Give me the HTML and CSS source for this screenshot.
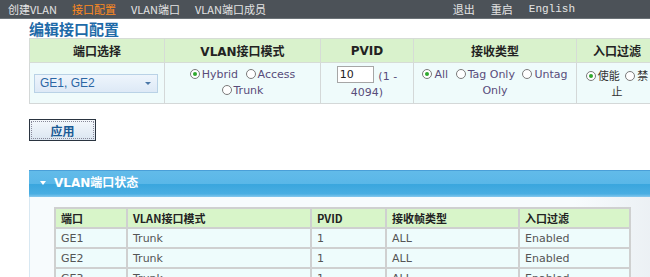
FILE: index.html
```html
<!DOCTYPE html>
<html lang="zh-CN">

<head>
    <meta charset="UTF-8">
    <title>接口配置</title>
    <link rel="stylesheet" href="styles.css">
</head>

<body>
    <!-- barra de navegação -->
    <div class="topbar">
        <div class="nav">
            <a>创建VLAN</a>
            <a class="active">接口配置</a>
            <a>VLAN端口</a>
            <a>VLAN端口成员</a>
        </div>
        <div class="tools">
            <a>退出</a>
            <a>重启</a>
            <a>English</a>
        </div>
    </div>

    <div class="content">
        <h1 class="title">编辑接口配置</h1>

        <table class="config">
            <tr>
                <th class="c1">端口选择</th>
                <th class="c2">VLAN接口模式</th>
                <th class="c3">PVID</th>
                <th class="c4">接收类型</th>
                <th class="c5">入口过滤</th>
            </tr>
            <tr>
                <td>
                    <div class="select">GE1, GE2<span class="caret"></span></div>
                </td>
                <td>
                    <span class="opt"><span class="radio on"></span>Hybrid</span>
                    <span class="opt"><span class="radio"></span>Access</span><br>
                    <span class="opt"><span class="radio"></span>Trunk</span>
                </td>
                <td>
                    <span class="pvid">10</span> (1 - 4094)
                </td>
                <td>
                    <span class="opt"><span class="radio on"></span>All</span>
                    <span class="opt"><span class="radio"></span>Tag Only</span>
                    <span class="opt"><span class="radio"></span>Untag</span> Only
                </td>
                <td class="filter">
                    <span class="radio on"></span>使能 <span class="radio gap"></span>禁止
                </td>
            </tr>
        </table>

        <button class="apply">应用</button>

        <div class="panel">
            <div class="panel-head"><span class="arrow"></span>VLAN端口状态</div>
            <div class="panel-body">
                <table class="status">
                    <tr>
                        <th class="s1">端口</th>
                        <th class="s2">VLAN接口模式</th>
                        <th class="s3">PVID</th>
                        <th class="s4">接收帧类型</th>
                        <th class="s5">入口过滤</th>
                    </tr>
                    <tr>
                        <td>GE1</td>
                        <td>Trunk</td>
                        <td>1</td>
                        <td>ALL</td>
                        <td>Enabled</td>
                    </tr>
                    <tr>
                        <td>GE2</td>
                        <td>Trunk</td>
                        <td>1</td>
                        <td>ALL</td>
                        <td>Enabled</td>
                    </tr>
                    <tr>
                        <td>GE3</td>
                        <td>Trunk</td>
                        <td>1</td>
                        <td>ALL</td>
                        <td>Enabled</td>
                    </tr>
                </table>
            </div>
        </div>
    </div>
</body>

</html>
```

FILE: styles.css
```css
html, body {
    margin: 0;
    overflow: hidden;
    background-color: #fff;
    font-family: "DejaVu Sans", "Noto Sans CJK SC", sans-serif;
}

.topbar {
    display: flex;
    justify-content: space-between;
    height: 18px;
    background-color: #4c5258;
    border-bottom: 1px solid #6b7277;
    font-family: "Noto Sans CJK SC", sans-serif;
    font-size: 11px;
    line-height: 18px;
    color: #e4e4e4;
}

.nav {
    display: flex;
    gap: 15px;
    padding-left: 8px;
}

.nav a.active {
    color: #ff8a1e;
}

.tools {
    display: flex;
    gap: 16px;
    padding-right: 75px;
}

.tools a:last-child {
    font-family: "Liberation Mono", monospace;
}

.content {
    margin-left: 29px;
    width: 640px;
}

.title {
    margin: 0;
    height: 19px;
    font-family: "Noto Sans CJK SC", sans-serif;
    font-size: 15px;
    line-height: 19px;
    color: #1e6aa8;
    font-weight: bold;
}

table {
    border-collapse: collapse;
}

.config {
    width: 623px;
    table-layout: fixed;
    font-size: 11px;
    color: #584c7a;
}

.config th {
    height: 23px;
    background-color: #d9f2cc;
    border: 1px solid #d6dcd6;
    font-size: 12px;
    color: #222;
    padding: 0 4px;
}

.config td {
    height: 40px;
    background-color: #effbfb;
    border: 1px solid #d4d8d8;
    text-align: center;
    line-height: 16px;
    padding: 0 4px;
}

.c1 { width: 126px; }
.c2 { width: 147px; }
.c3 { width: 84px; }
.c4 { width: 154px; }
.c5 { width: 72px; }

.select {
    position: relative;
    height: 19px;
    width: 124px;
    border: 1px solid #b9d2e6;
    background: linear-gradient(#eef5fc, #dde9f6);
    text-align: left;
    padding-left: 5px;
    box-sizing: border-box;
    font-family: "Liberation Sans", sans-serif;
    font-size: 12px;
    line-height: 17px;
    color: #2b66a4;
}

.caret {
    position: absolute;
    right: 6px;
    top: 7px;
    border-left: 3px solid transparent;
    border-right: 3px solid transparent;
    border-top: 3px solid #4b78a8;
}

.opt {
    white-space: nowrap;
    margin: 0 2px;
}

.radio {
    display: inline-block;
    width: 8px;
    height: 8px;
    border: 1px solid #7a7a7a;
    border-radius: 50%;
    background-color: #fff;
    margin-right: 2px;
    vertical-align: -1px;
    position: relative;
}

.radio.on::after {
    content: "";
    position: absolute;
    left: 2px;
    top: 2px;
    width: 4px;
    height: 4px;
    border-radius: 50%;
    background-color: #2ea82e;
}

.radio.gap {
    margin-left: 3px;
}

.pvid {
    display: inline-block;
    width: 37px;
    height: 17px;
    border: 1px solid #a6a6a6;
    background-color: #fff;
    box-sizing: border-box;
    text-align: left;
    padding-left: 2px;
    line-height: 15px;
    color: #222;
    vertical-align: 2px;
    margin-right: 1px;
}

.filter {
    font-family: "Noto Sans CJK SC", sans-serif;
    font-size: 11px;
    color: #333;
}

.apply {
    display: block;
    margin-top: 15px;
    width: 67px;
    height: 22px;
    border: 1px solid #2a3440;
    outline: 1px dotted #889;
    outline-offset: -3px;
    background: linear-gradient(#f4f8fc, #dbe6f1);
    font-family: "Noto Sans CJK SC", sans-serif;
    font-size: 12px;
    font-weight: bold;
    color: #1a5a94;
    padding: 0;
}

.panel {
    margin-top: 29px;
    width: 640px;
}

.panel-head {
    height: 27px;
    background: linear-gradient(#62bbe9 0%, #5ab7e8 48%, #3aa6de 52%, #4aaee2 88%, #86c8ee 100%);
    border-top: 1px solid #4a9fd8;
    box-sizing: border-box;
    color: #fff;
    font-size: 12px;
    font-weight: bold;
    line-height: 25px;
    padding-left: 11px;
}

.arrow {
    display: inline-block;
    margin-right: 8px;
    vertical-align: 2px;
    border-left: 3px solid transparent;
    border-right: 3px solid transparent;
    border-top: 4px solid #fff;
}

.panel-body {
    background: linear-gradient(90deg, #f7fbfd 85%, #e9eef2);
    border-left: 1px solid #d8e8f2;
    padding: 10px 0 0 24px;
    height: 100px;
}

.status {
    width: 565px;
    table-layout: fixed;
    font-size: 11px;
    color: #555;
}

.status th,
.status td {
    border: 2px solid #cfd0d0;
    text-align: left;
    padding: 0 5px;
}

.status th {
    height: 18px;
    background-color: #d8f5c9;
    color: #222;
    font-family: "Noto Sans CJK SC", sans-serif;
    font-size: 11px;
}

.status td {
    height: 18px;
    background-color: #eefcfc;
}

.s1 { width: 60px; }
.s2 { width: 172px; }
.s3 { width: 63px; }
.s4 { width: 121px; }
.s5 { width: 99px; }
```
